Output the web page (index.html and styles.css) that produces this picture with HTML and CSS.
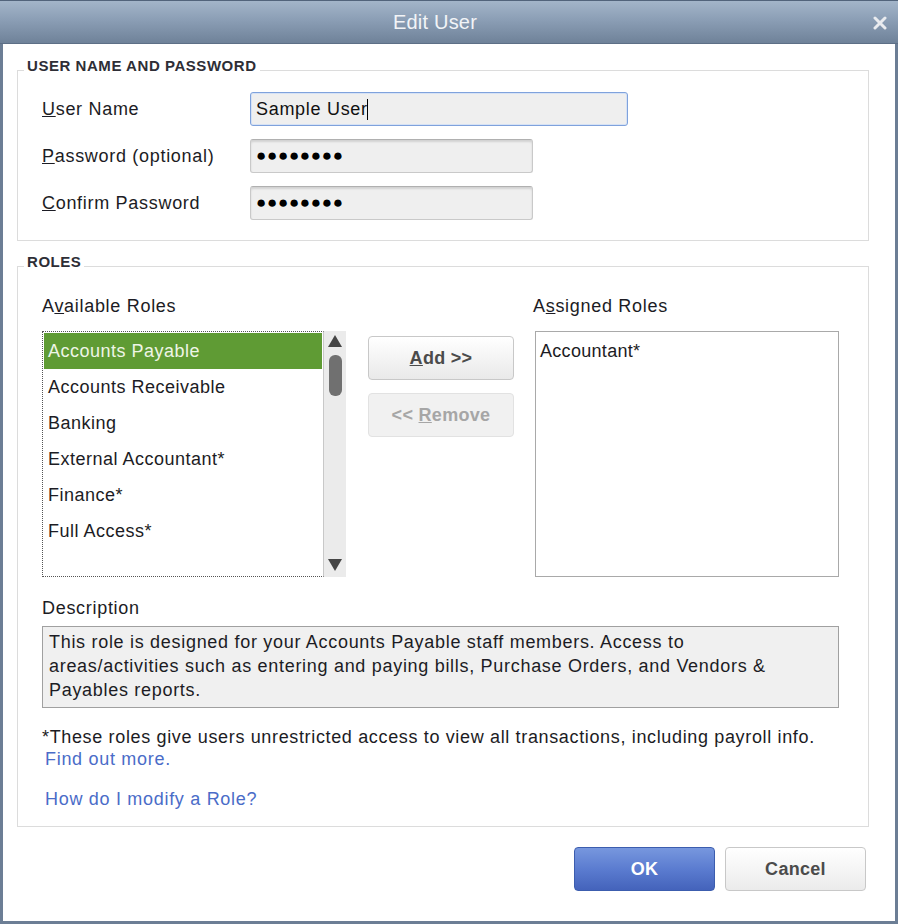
FILE: index.html
```html
<!DOCTYPE html>
<html>
<head>
<meta charset="utf-8">
<title>Edit User</title>
<link rel="stylesheet" href="styles.css">
</head>
<body>
<div class="window">
  <div class="titlebar">
    <span class="title">Edit User</span>
    <span class="close"><svg width="14" height="14" viewBox="0 0 14 14"><path d="M2 2 L12 12 M12 2 L2 12" stroke="#e9ebef" stroke-width="3" stroke-linecap="round"/></svg></span>
  </div>
  <div class="body">
    <fieldset class="group group-user">
      <legend>USER NAME AND PASSWORD</legend>
      <div class="form-row">
        <label class="field-label"><u>U</u>ser Name</label>
        <div class="input input-focus input-wide">Sample User<span class="caret"></span></div>
      </div>
      <div class="form-row">
        <label class="field-label"><u>P</u>assword (optional)</label>
        <div class="input input-pw"><span class="dots">●●●●●●●●</span></div>
      </div>
      <div class="form-row">
        <label class="field-label"><u>C</u>onfirm Password</label>
        <div class="input input-pw"><span class="dots">●●●●●●●●</span></div>
      </div>
    </fieldset>

    <fieldset class="group group-roles">
      <legend>ROLES</legend>
      <div class="roles-grid">
        <div class="col-label">A<u>v</u>ailable Roles</div>
        <div></div>
        <div class="col-label col-label-right">A<u>s</u>signed Roles</div>

        <div class="listbox">
          <ul class="list">
            <li class="selected">Accounts Payable</li>
            <li>Accounts Receivable</li>
            <li>Banking</li>
            <li>External Accountant*</li>
            <li>Finance*</li>
            <li>Full Access*</li>
          </ul>
          <div class="scrollbar">
            <span class="arrow arrow-up"></span>
            <span class="thumb"></span>
            <span class="track"></span>
            <span class="arrow arrow-down"></span>
          </div>
        </div>
        <div class="move-buttons">
          <button class="btn btn-add"><u>A</u>dd &gt;&gt;</button>
          <button class="btn btn-remove" disabled>&lt;&lt; <u>R</u>emove</button>
        </div>
        <div class="assigned">
          <div class="assigned-item">Accountant*</div>
        </div>
      </div>

      <div class="desc-label">Description</div>
      <div class="desc-box">This role is designed for your Accounts Payable staff members. Access to<br>areas/activities such as entering and paying bills, Purchase Orders, and Vendors &amp;<br>Payables reports.</div>

      <div class="footnote">*These roles give users unrestricted access to view all transactions, including payroll info.</div>
      <a class="link" href="#">Find out more.</a>
      <a class="link link-modify" href="#">How do I modify a Role?</a>
    </fieldset>

    <div class="actions">
      <button class="btn btn-ok">OK</button>
      <button class="btn btn-cancel">Cancel</button>
    </div>
  </div>
</div>
</body>
</html>
```

FILE: styles.css
```css
* { box-sizing: border-box; }

html, body {
  margin: 0;
  padding: 0;
  background: #ffffff;
}

body {
  font-family: "Liberation Sans", Arial, sans-serif;
  font-size: 18px;
  letter-spacing: 0.7px;
  color: #1c1c24;
}

.window {
  width: 898px;
  height: 924px;
  display: flex;
  flex-direction: column;
  background: #ffffff;
}

.titlebar {
  height: 44px;
  flex: none;
  display: flex;
  align-items: center;
  justify-content: center;
  position: relative;
  border-top: 1px solid #52647b;
  border-bottom: 1px solid #5d6f86;
  background: linear-gradient(to bottom, #a3b5c9 0%, #8b9eb5 45%, #6f8299 100%);
  padding-right: 28px;
}

.title {
  font-size: 20px;
  color: #f2f4f7;
  letter-spacing: 0.2px;
}

.close {
  position: absolute;
  right: 11px;
  top: 15px;
  width: 14px;
  height: 14px;
  display: flex;
}

.body {
  flex: 1;
  border: 3px solid #6c7e95;
  border-top: none;
  padding: 14px 26px 0 14px;
  display: flex;
  flex-direction: column;
}

.group {
  margin: 0;
  border: 1px solid #dcdcdc;
  min-width: 0;
}

.group legend {
  font-size: 15px;
  line-height: 16px;
  font-weight: bold;
  color: #2e2e36;
  padding: 0 3px 8px 3px;
  margin-left: -18px;
  letter-spacing: 0.55px;
}

.group-user {
  padding: 10px 24px 20px 24px;
}

.form-row {
  display: flex;
  align-items: center;
  height: 34px;
  margin-bottom: 13px;
}

.form-row:last-child {
  margin-bottom: 0;
}

.field-label {
  width: 208px;
  flex: none;
  line-height: 22px;
}

.input {
  height: 34px;
  border-radius: 3px;
  background: #efefef;
  display: flex;
  align-items: center;
  padding-left: 5px;
  color: #111;
}

.input-wide {
  width: 378px;
}

.input-focus {
  border: 1px solid #7fa2dc;
  box-shadow: inset 0 0 0 1px #d6e2f5;
}

.caret {
  display: inline-block;
  width: 1px;
  height: 21px;
  background: #000;
  margin-left: -1px;
}

.input-pw {
  width: 283px;
  border: 1px solid #c9c9c9;
  border-top-color: #b0b0b0;
  box-shadow: inset 0 2px 2px rgba(0, 0, 0, 0.12);
}

.dots {
  font-size: 17px;
  letter-spacing: 0.7px;
  color: #000;
  line-height: 18px;
}

.group-roles {
  margin-top: 13px;
  padding: 17px 24px 16px 24px;
}

.roles-grid {
  display: grid;
  grid-template-columns: 304px 146px 304px;
  column-gap: 22px;
  row-gap: 14px;
}

.col-label {
  line-height: 22px;
}

.col-label-right {
  margin-left: -3px;
}

.listbox {
  height: 246px;
  display: flex;
}

.list {
  list-style: none;
  margin: 0;
  padding: 1px 0 0 0;
  flex: 1;
  border: 1px dotted #555;
  border-right: 1px solid #c8c8c8;
}

.list li {
  height: 36px;
  line-height: 36px;
  padding-left: 4px;
  margin: 0 1px;
  letter-spacing: 0.5px;
}

.list li.selected {
  background: #5f9b34;
  color: #eef5e6;
}

.scrollbar {
  width: 22px;
  flex: none;
  background: #ebebeb;
  display: flex;
  flex-direction: column;
  align-items: center;
}

.arrow {
  width: 0;
  height: 0;
  border-left: 7px solid transparent;
  border-right: 7px solid transparent;
  flex: none;
}

.arrow-up {
  margin-top: 4px;
  border-bottom: 12px solid #454545;
}

.arrow-down {
  margin-bottom: 6px;
  border-top: 12px solid #454545;
}

.thumb {
  width: 13px;
  height: 41px;
  margin-top: 8px;
  border-radius: 6px;
  background: #707070;
  flex: none;
}

.track {
  flex: 1;
}

.move-buttons {
  display: flex;
  flex-direction: column;
  gap: 13px;
  padding-top: 5px;
}

.btn {
  font-family: "Liberation Sans", Arial, sans-serif;
  font-size: 18px;
  font-weight: bold;
  letter-spacing: 0.3px;
  height: 44px;
  border-radius: 4px;
  cursor: default;
}

.btn-add {
  width: 146px;
  border: 1px solid #c8c8c8;
  background: linear-gradient(to bottom, #ffffff 0%, #f2f2f2 60%, #e9e9e9 100%);
  color: #4b4b4b;
}

.btn-remove {
  width: 146px;
  border: 1px solid #e2e2e2;
  background: #f1f1f1;
  color: #a6a6a6;
}

.assigned {
  height: 246px;
  margin-left: -1px;
  margin-right: 1px;
  border: 1px solid #a9a9a9;
  padding: 6px 4px;
}

.assigned-item {
  line-height: 26px;
  letter-spacing: 0.3px;
}

.desc-label {
  margin-top: 20px;
  line-height: 22px;
}

.desc-box {
  margin-top: 7px;
  border: 1px solid #a0a0a0;
  background: #f0f0f0;
  padding: 3px 6px 5px 6px;
  line-height: 24px;
  width: 797px;
  white-space: nowrap;
}

.footnote {
  margin-top: 18px;
  line-height: 22px;
  letter-spacing: 0.65px;
}

.link {
  display: block;
  width: max-content;
  color: #4a6cc8;
  text-decoration: none;
  line-height: 22px;
  margin-left: 3px;
}

.link-modify {
  margin-top: 18px;
}

.actions {
  display: flex;
  justify-content: flex-end;
  gap: 10px;
  margin-top: 20px;
  margin-right: 3px;
}

.btn-ok {
  width: 141px;
  border: 1px solid #3c5dae;
  background: linear-gradient(to bottom, #7797de 0%, #5b7cd0 50%, #4463bb 100%);
  color: #ffffff;
}

.btn-cancel {
  width: 141px;
  border: 1px solid #c8c8c8;
  background: linear-gradient(to bottom, #ffffff 0%, #f3f3f3 60%, #ebebeb 100%);
  color: #4b4b4b;
}
```
